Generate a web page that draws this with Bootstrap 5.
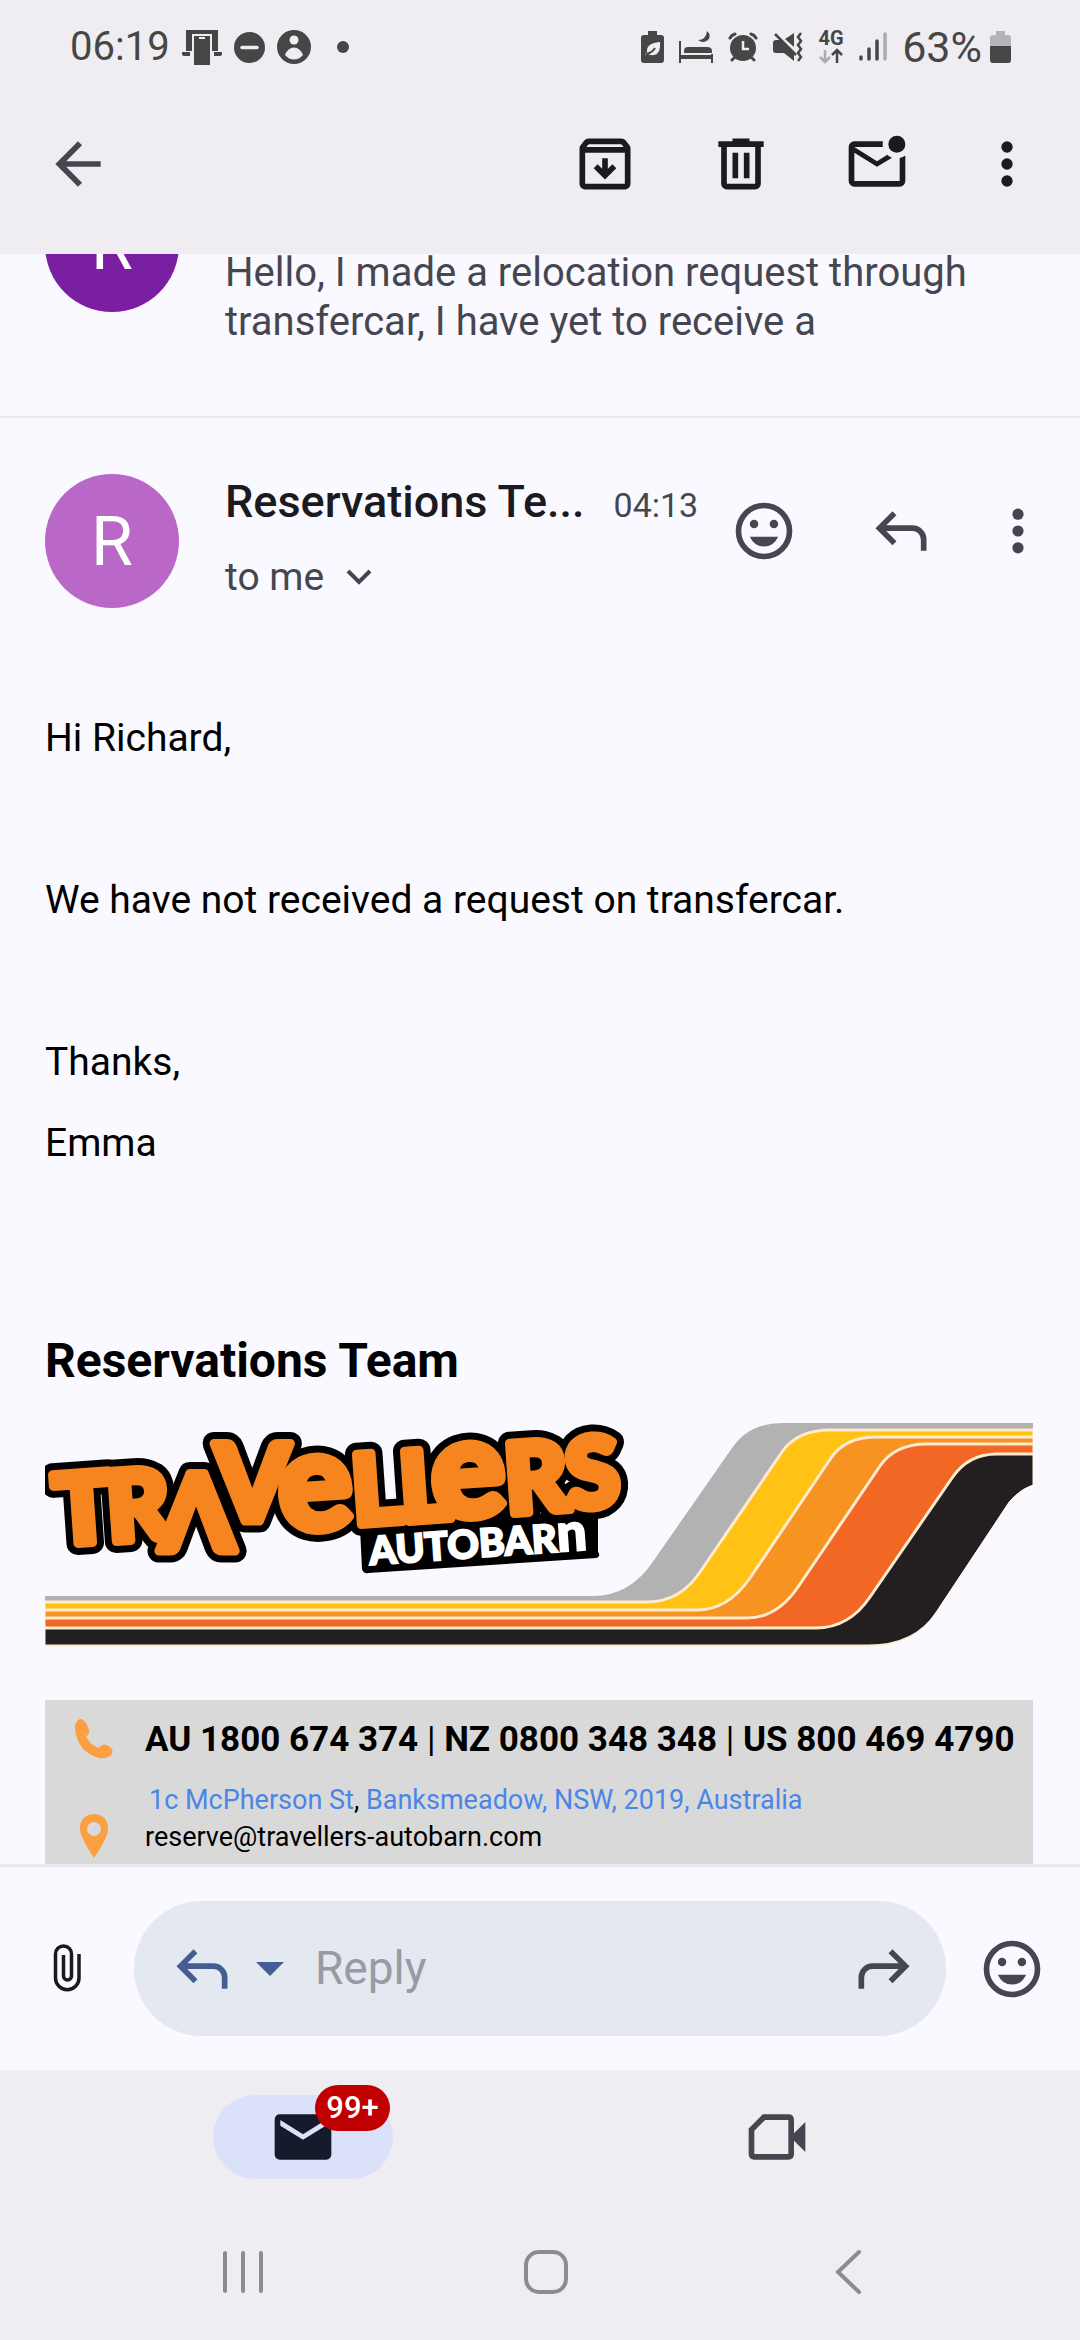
<!DOCTYPE html>
<html lang="en">
<head>
<meta charset="utf-8">
<meta name="viewport" content="width=device-width, initial-scale=1">
<title>Reservations Team</title>
<link rel="stylesheet" href="https://cdn.jsdelivr.net/npm/bootstrap@5.3.0/dist/css/bootstrap.min.css">
<style>
  :root { --chrome: #efedf1; --surface: #faf9ff; --ink: #1b1b1f; --muted: #45464f; --status: #464646; }
  body { font-family: Roboto, "Liberation Sans", sans-serif; background: var(--surface); color: var(--ink); }
  svg { display: block; flex: none; }
  .screen { height: 100vh; }
  .chrome { background: var(--chrome); }

  .status { height: 94px; padding: 0 69px 0 70px; color: var(--status); font-size: 40px; line-height: 48px; }
  .status-left { gap: 12px; }
  .status-right { gap: 15px; }
  .battery-level { gap: 8px; font-size: 43px; }

  .icon-btn { padding: 0; border: 0; background: none; color: inherit; line-height: 1; flex: none; }
  .icon-btn svg { width: 68px; height: 68px; fill: currentColor; }
  .toolbar { height: 160px; padding: 0 45px 20px 44px; }
  .toolbar-actions { gap: 68px; }
  .toolbar-actions .more-btn svg { width: 56px; }
  .msg-actions .more-btn svg { width: 28px; }
  .text-muted-ink { color: var(--muted); }

  .avatar { width: 134px; height: 134px; font-size: 68px; line-height: 136px; margin-right: 46px; flex: none; color: #fff; background: #b968c7; }
  .avatar-deep { background: #7b1fa2; margin-bottom: 34px; }
  .msg-collapsed { height: 164px; padding: 0 45px 70px; border-bottom: 2px solid #e9e8ed; }
  .snippet { font-size: 40px; line-height: 49px; white-space: nowrap; }
  .msg-head { padding: 56px 48px 0 45px; }
  .msg-meta { gap: 29px; }
  .sender { font-size: 45px; line-height: 56px; font-weight: 500; }
  .sent-at { font-size: 34px; }
  .recipient { font-size: 39px; line-height: 48px; gap: 22px; margin-top: 22px; }
  .msg-actions { margin-top: 23px; gap: 69px; }

  .mail-body { padding: 90px 47px 0 45px; color: #000; font-size: 39px; line-height: 81px; }
  .signature { font-size: 48px; line-height: 58px; padding-top: 67px; }
  .brand-art { width: 100%; height: auto; margin-top: 33px; }
  .wordmark { font-family: Lato, sans-serif; font-weight: 900; font-size: 97px; }
  .round-e { font-size: 138px; }
  .peak { font-size: 106px; }
  .brand-sub { font-family: Lato, sans-serif; font-weight: 900; font-size: 39px; fill: #fff; stroke: #fff; stroke-width: 2; }
  .small-n { font-size: 53px; }
  .contact { background: #d9d9d9; margin-top: 53px; line-height: 37px; font-size: 27px; }
  .contact-icon { width: 100px; flex: none; }
  .contact-phones { height: 78px; font-size: 35px; font-weight: 700; }
  .contact-place { height: 108px; margin-top: 4px; }
  .contact a { color: #4a86e8; text-decoration: none; }

  .reply-bar { border-top: 3px solid #e9e8ed; background: var(--surface); padding: 34px; gap: 32px; }
  .reply-pill { height: 135px; min-width: 0; background: #e4e8f1; padding: 0 28px 0 34px; }
  .reply-pill input { border: 0; background: none; outline: 0; font-size: 46px; padding: 0; margin-left: 27px; width: 100%; min-width: 0; }
  .reply-pill input::placeholder { color: #999aa3; opacity: 1; }
  .reply-pill .caret-btn svg { width: 36px; height: 16px; }
  .accent { color: #455e91; }

  .tabs { padding: 25px 213px 0; }
  .tab-pill { width: 180px; height: 84px; border: 0; padding: 0; background: none; }
  .tab-on { background: #dce1fa; color: #151b2c; }
  .unread { top: -10px; left: 102px; height: 46px; width: 75px; line-height: 46px; font-size: 31px; font-weight: 500; background: #c00000; color: #fff; }
  .sysnav { padding: 61px 202px 36px 213px; color: #8c8b8d; }
  .sysnav svg { width: 60px; height: 64px; fill: none; stroke: currentColor; stroke-width: 4; stroke-linecap: round; }
</style>
<script src="https://cdn.jsdelivr.net/npm/bootstrap@5.3.0/dist/js/bootstrap.bundle.min.js"></script>
</head>
<body>
<svg width="0" height="0" class="position-absolute" aria-hidden="true">
  <symbol id="i-more" viewBox="7 0 10 24"><circle cx="12" cy="6" r="2"/><circle cx="12" cy="12" r="2"/><circle cx="12" cy="18" r="2"/></symbol>
  <symbol id="i-reply" viewBox="0 0 24 24"><path d="M19 19v-4q0-1.25-.875-2.125T16 12H6.8l3.6 3.6L9 17l-6-6 6-6 1.4 1.4L6.8 10H16q2.075 0 3.538 1.463T21 15v4z"/></symbol>
  <symbol id="i-smile" viewBox="0 0 24 24"><circle cx="12" cy="12" r="9" fill="none" stroke="currentColor" stroke-width="2"/><circle cx="8.5" cy="9.5" r="1.5"/><circle cx="15.5" cy="9.5" r="1.5"/><path d="M7 14h10q-1.600 3.500-5 3.500T7 14z"/></symbol>
</svg>

<div class="screen d-flex flex-column overflow-hidden">
  <header class="chrome">
    <div class="status d-flex align-items-center justify-content-between">
      <div class="status-left d-flex align-items-center">
        <span>06:19</span>
        <svg width="40" height="36" viewBox="0 0 40 36" fill="currentColor"><path d="M4 1h32v21h-6V5H10v17H4zM0 23h8v4H3q-3 0-3-2zM32 23h8v2q0 2-3 2h-5z"/><path d="M12 7h16v29H12z"/><path d="M17 9h6" stroke="#efedf1" stroke-width="2"/></svg>
        <svg width="31" height="31" viewBox="0 0 31 31"><circle cx="15.500" cy="15.500" r="15.500" fill="currentColor"/><path d="M8 15.500h15" stroke="#efedf1" stroke-width="3.500" stroke-linecap="round"/></svg>
        <svg width="34" height="34" viewBox="0 0 34 34"><circle cx="17" cy="17" r="17" fill="currentColor"/><circle cx="17" cy="10" r="4.500" fill="#efedf1"/><path d="M8 25q3-7.500 9-7.500t9 7.500q-4 4.500-9 4.500T8 25z" fill="#efedf1"/></svg>
        <svg width="36" height="12" viewBox="0 0 36 12"><circle cx="20" cy="6" r="6" fill="currentColor"/></svg>
      </div>
      <div class="status-right d-flex align-items-center">
        <svg width="23" height="32" viewBox="0 0 23 32"><path d="M7 0h9v4h4q3 0 3 3v22q0 3-3 3H3q-3 0-3-3V7q0-3 3-3h4z" fill="currentColor"/><path d="M19 11q1 12-6 13-4 .6-6-1l-3 1 2-3q-1-9 13-10z" fill="#efedf1"/><path d="M5 23q6-1 9-6" fill="none" stroke="currentColor" stroke-width="2"/></svg>
        <svg width="34" height="32" viewBox="0 0 34 32" fill="currentColor"><path d="M0 10h2v14h30v-1h2v9h-2v-4H2v4H0z"/><path d="M5 22v-2q0-4 4-4h19q5 0 5 4v2z"/><path d="M28 0q5 4 1 9-5 4-10 0 8 0 9-9z"/></svg>
        <svg width="30" height="30" viewBox="0 0 30 30"><circle cx="15" cy="16" r="13" fill="currentColor"/><path d="M2 6q1.500-3 5-4M28 6q-1.500-3-5-4M6 26l-2 2M24 26l2 2" stroke="currentColor" stroke-width="3" stroke-linecap="round" fill="none"/><path d="M15 9v8h6" stroke="#efedf1" stroke-width="2.500" fill="none"/></svg>
        <svg width="30" height="30" viewBox="0 0 30 30" fill="currentColor"><path d="M3 8h4l14 13v8l-10-8H3q-3 0-3-3v-7q0-3 3-3zM12 7l9-6v14z"/><path d="M2 2l21 21" stroke="currentColor" stroke-width="2.500"/><path d="M28 1l-3 4 3 4-3 4 3 4-3 4 3 4-3 4" fill="none" stroke="currentColor" stroke-width="2.500"/></svg>
        <svg width="26" height="34" viewBox="0 0 26 34" fill="none" stroke-width="2.500"><text x="13" y="15" font-size="20" font-weight="700" text-anchor="middle" fill="currentColor">4G</text><path d="M7 20v12M2 27l5 5 5-5" stroke="#acabad"/><path d="M19 33V20M14 25l5-5 5 5" stroke="currentColor"/></svg>
        <svg width="28" height="30" viewBox="0 0 28 30" fill="none" stroke="currentColor" stroke-width="3.500" stroke-linecap="round"><path d="M2 25v2M10 17v10M18 9v18"/><path d="M26 2v25" stroke="#acabad"/></svg>
        <div class="battery-level d-flex align-items-center">
          <span>63%</span>
          <svg width="21" height="32" viewBox="0 0 21 32"><path d="M6 0h9v4h3q3 0 3 3v9H0V7q0-3 3-3h3z" fill="#b5b3b7"/><path d="M0 15h21v14q0 3-3 3H3q-3 0-3-3z" fill="currentColor"/></svg>
        </div>
      </div>
    </div>
    <div class="toolbar d-flex align-items-center justify-content-between">
      <button class="icon-btn text-muted-ink" type="button" aria-label="Back"><svg viewBox="0 0 24 24"><path d="M7.825 13l5.600 5.600L12 20l-8-8 8-8 1.425 1.400-5.600 5.600H20v2z"/></svg></button>
      <div class="toolbar-actions d-flex">
        <button class="icon-btn" type="button" aria-label="Archive"><svg viewBox="0 0 24 24"><path fill-rule="evenodd" d="M5 21q-.825 0-1.413-.587T3 19V6.525q0-.35.113-.675t.337-.6L4.700 3.725q.275-.35.687-.538T6.250 3h11.500q.45 0 .863.188t.687.537l1.250 1.525q.225.275.338.6t.112.675V19q0 .825-.587 1.413T19 21zM5.400 6h13.200l-.850-1H6.250zM5 19h14V8H5z"/><path d="m12 17.500 4-4-1.400-1.400-1.600 1.600V10h-2v3.700l-1.600-1.600L8 13.500z"/></svg></button>
        <button class="icon-btn" type="button" aria-label="Delete"><svg viewBox="0 0 24 24"><path fill-rule="evenodd" d="M7 21q-.825 0-1.413-.587T5 19V6H4V4h5V3h6v1h5v2h-1v13q0 .825-.587 1.413T17 21zM17 6H7v13h10z"/><path d="M9 17h2V8H9zm4 0h2V8h-2z"/></svg></button>
        <button class="icon-btn" type="button" aria-label="Mark as unread"><svg viewBox="0 0 24 24"><path d="M4 20q-.825 0-1.412-.587T2 18V6q0-.825.588-1.412T4 4h10.100q-.1.5-.1 1t.1 1H4l8 5 3.650-2.275q.375.35.788.613t.887.487L12 13 4 8v10h16V9.900q.575-.125 1.075-.350T22 9v9q0 .825-.587 1.413T20 20z"/><circle cx="19" cy="5" r="3"/></svg></button>
        <button class="icon-btn more-btn" type="button" aria-label="More options"><svg><use href="#i-more"/></svg></button>
      </div>
    </div>
  </header>

  <main class="flex-fill overflow-hidden">
    <section class="msg-collapsed d-flex align-items-end overflow-hidden text-muted-ink">
      <div class="avatar avatar-deep rounded-circle text-center">R</div>
      <div class="snippet">Hello, I made a relocation request through<br>transfercar, I have yet to receive a</div>
    </section>

    <article>
      <div class="msg-head d-flex align-items-start">
        <div class="avatar rounded-circle text-center">R</div>
        <div class="flex-fill">
          <div class="msg-meta d-flex align-items-baseline">
            <span class="sender text-nowrap">Reservations Te...</span>
            <time class="sent-at text-muted-ink">04:13</time>
          </div>
          <div class="recipient d-flex align-items-center text-muted-ink">
            <span>to me</span>
            <svg width="26" height="16" viewBox="0 0 26 16" fill="none" stroke="currentColor" stroke-width="4"><path d="M2 2l11 11L24 2"/></svg>
          </div>
        </div>
        <div class="msg-actions d-flex text-muted-ink">
          <button class="icon-btn" type="button" aria-label="Add reaction"><svg><use href="#i-smile"/></svg></button>
          <button class="icon-btn" type="button" aria-label="Reply"><svg><use href="#i-reply"/></svg></button>
          <button class="icon-btn more-btn" type="button" aria-label="Message options"><svg><use href="#i-more"/></svg></button>
        </div>
      </div>

      <div class="mail-body">
        <p class="m-0">Hi Richard,</p>
        <br>
        <p class="m-0">We have not received a request on transfercar.</p>
        <br>
        <p class="m-0">Thanks,</p>
        <p class="m-0">Emma</p>
        <br>
        <div class="signature fw-bold">Reservations Team</div>

        <svg class="brand-art" viewBox="45 1423 988 224" role="img" aria-label="Travellers Autobarn">
          <g stroke="#fdebd0" stroke-width="3">
            <path fill="#b2b2b2" stroke="none" d="M45 1596H593Q629 1596 652 1563L732 1448Q749 1423 782 1423H1033V1486Q1021 1490 1010 1503L937 1613Q915 1646 868 1646H45z"/>
            <path fill="#ffc215" d="M44 1602H647Q680 1602 700 1572L782 1452Q797 1430 830 1430H1034V1486Q1021 1490 1010 1503L937 1613Q915 1646 868 1646H44z"/>
            <path fill="#f79320" d="M44 1610H697Q728 1610 750 1578L831 1458Q845 1437 877 1437H1034V1486Q1021 1490 1010 1503L937 1613Q915 1646 868 1646H44z"/>
            <path fill="#f26724" d="M44 1618H747Q777 1618 798 1587L880 1466Q895 1444 927 1444H1034V1486Q1021 1490 1010 1503L937 1613Q915 1646 868 1646H44z"/>
            <path fill="#231f20" d="M44 1628H816Q849 1628 870 1597L952 1478Q968 1454 997 1454H1034V1486Q1021 1490 1010 1503L937 1613Q915 1646 868 1646H44z"/>
            <path fill="none" stroke="#faf9ff" d="M1034 1486Q1021 1490 1010 1503L937 1613Q915 1648 868 1648H44"/>
          </g>
          <defs>
            <text id="wordmark" class="wordmark" x="56 109 160 215 281 354 402 434 507 568" y="1545 1542 1551 1521 1532 1525 1522 1519 1514 1509" rotate="-4 -4 0 0 -4 -4 -4 -4 -4 -4">TR<tspan class="peak">ΛV</tspan><tspan class="round-e">e</tspan>LL<tspan class="round-e">e</tspan>RS</text>
          </defs>
          <path d="M361 1528L597 1510V1552Q600 1556 596 1557L368 1572Q364 1573 363 1569z" stroke="#000" stroke-width="2"/>
          <use href="#wordmark" fill="#000" stroke="#000" stroke-width="23" stroke-linejoin="round"/>
          <use href="#wordmark" fill="#f6851f" stroke="#f6851f" stroke-width="9" stroke-linejoin="round"/>
          <text class="brand-sub" transform="translate(370 1565) rotate(-4)">AUTOBAR<tspan class="small-n">n</tspan></text>
        </svg>

        <div class="contact">
          <div class="contact-phones d-flex align-items-center">
            <span class="contact-icon"><svg class="ms-4" width="50" height="42" viewBox="0 0 50 42"><path d="M9 2q-3 3-3 8 2 24 24 30 7 1 12-3 3-4 0-7-6-6-10-2l-3 2Q19 25 17 18q4-1 3-6Q17 2 12 1q-2 0-3 1z" fill="#fb9f40"/></svg></span>
            <span class="text-nowrap">AU 1800 674 374 <span class="fw-normal">|</span> NZ 0800 348 348 <span class="fw-normal">|</span> US 800 469 4790</span>
          </div>
          <div class="contact-place d-flex">
            <span class="contact-icon align-self-center"><svg class="ms-4" width="50" height="44" viewBox="0 0 50 44"><path fill-rule="evenodd" d="M25 0q14 1 14 15 0 8-14 29Q11 23 11 15 11 1 25 0zm0 8a7 7 0 1 0 0 14 7 7 0 0 0 0-14z" fill="#fb9f40"/></svg></span>
            <div>
              <div class="ps-1"><a href="#">1c McPherson St</a>, <a href="#">Banksmeadow, NSW, 2019, Australia</a></div>
              <div>reserve@travellers-autobarn.com</div>
            </div>
          </div>
        </div>
      </div>
    </article>
  </main>

  <form class="reply-bar d-flex align-items-center m-0">
    <button class="icon-btn" type="button" aria-label="Attach file"><svg viewBox="0 0 68 68"><path d="M45 19v24a11.500 11.500 0 0 1-23.500 0V19a8 8 0 0 1 16 0v22a4 4 0 0 1-8 0V20" fill="none" stroke="currentColor" stroke-width="3.500"/></svg></button>
    <div class="reply-pill rounded-pill d-flex align-items-center flex-fill">
      <button class="icon-btn accent" type="button" aria-label="Reply type"><svg><use href="#i-reply"/></svg></button>
      <button class="icon-btn caret-btn accent ms-3" type="button" aria-label="Choose reply type"><svg viewBox="0 0 36 16"><path d="M4 1h28L18 15z"/></svg></button>
      <input type="text" placeholder="Reply" aria-label="Reply">
      <button class="icon-btn text-muted-ink" type="button" aria-label="Forward"><svg viewBox="0 0 24 24"><g transform="matrix(-1 0 0 1 24 0)"><use href="#i-reply" width="24" height="24"/></g></svg></button>
    </div>
    <button class="icon-btn text-muted-ink" type="button" aria-label="Insert emoji"><svg><use href="#i-smile"/></svg></button>
  </form>

  <footer class="chrome">
    <nav class="tabs d-flex justify-content-between">
      <button class="tab-pill tab-on rounded-pill position-relative d-flex align-items-center justify-content-center" type="button" aria-label="Mail">
        <svg width="68" height="68" viewBox="0 0 24 24" fill="currentColor"><rect x="2" y="4" width="20" height="16" rx="1.800"/><path d="M4 6l8 5 8-5v2l-8 5-8-5z" fill="#dce1fa"/></svg>
        <span class="unread position-absolute rounded-pill text-center">99+</span>
      </button>
      <button class="tab-pill text-muted-ink d-flex align-items-center justify-content-center" type="button" aria-label="Meet">
        <svg width="68" height="68" viewBox="0 0 24 24" fill="currentColor"><path fill-rule="evenodd" d="M7 4h9q2 0 2 2v4.700l4-4v10.600l-4-4V18q0 2-2 2H4q-2 0-2-2V9zm.8 2L4 9.800V18h12V6z"/></svg>
      </button>
    </nav>
    <div class="sysnav d-flex justify-content-between">
      <button class="icon-btn" type="button" aria-label="Recent apps"><svg viewBox="0 0 60 64"><path d="M12 13v38M30 13v38M48 13v38"/></svg></button>
      <button class="icon-btn" type="button" aria-label="Home"><svg viewBox="0 0 60 64"><rect x="10" y="12" width="40" height="40" rx="13"/></svg></button>
      <button class="icon-btn" type="button" aria-label="System back"><svg viewBox="0 0 60 64"><path d="M41 12L20 32l21 20"/></svg></button>
    </div>
  </footer>
</div>
</body>
</html>
